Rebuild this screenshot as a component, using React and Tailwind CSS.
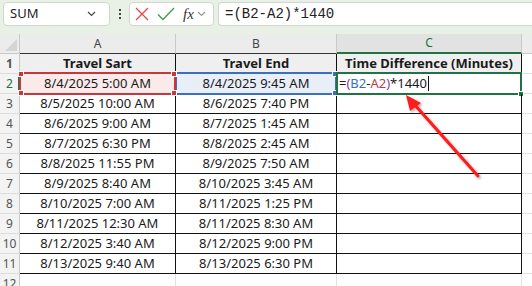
import React from 'react';

const rows = [
  ['8/4/2025 5:00 AM', '8/4/2025 9:45 AM'],
  ['8/5/2025 10:00 AM', '8/6/2025 7:40 PM'],
  ['8/6/2025 9:00 AM', '8/7/2025 1:45 AM'],
  ['8/7/2025 6:30 PM', '8/8/2025 2:45 AM'],
  ['8/8/2025 11:55 PM', '8/9/2025 7:50 AM'],
  ['8/9/2025 8:40 AM', '8/10/2025 3:45 AM'],
  ['8/10/2025 7:00 AM', '8/11/2025 1:25 PM'],
  ['8/11/2025 12:30 AM', '8/11/2025 8:30 AM'],
  ['8/12/2025 3:40 AM', '8/12/2025 9:00 PM'],
  ['8/13/2025 9:40 AM', '8/13/2025 6:30 PM'],
];

function Chevron({ className }) {
  return (
    <svg width="9" height="6" viewBox="0 0 9 6" className={className}>
      <path d="M1 1l3.5 3.5L8 1" fill="none" stroke="currentColor" strokeWidth="1.2" />
    </svg>
  );
}

function Handles({ color, corners }) {
  const pos = {
    tl: 'left-[-3px] top-[-3px]',
    tr: 'right-[-3px] top-[-3px]',
    bl: 'left-[-3px] bottom-[-3px]',
    br: 'right-[-3px] bottom-[-3px]',
  };
  return corners.map((c) => (
    <span key={c} className={`absolute w-[6px] h-[6px] border border-white ${color} ${pos[c]}`} />
  ));
}

function RowHeader({ n, active }) {
  return (
    <div
      className={`w-[20px] shrink-0 flex items-center justify-center text-[12px] bg-[#f3f3f3] border-b border-[#dcdcdc] relative ${
        active ? 'text-[#217346]' : 'text-[#555]'
      } border-r border-r-[#c9c9c9]`}
    >
      {n}
      {active && <span className="absolute right-[-1px] top-0 bottom-0 w-[2px] bg-[#217346]" />}
    </div>
  );
}

export default function App() {
  return (
    <div className="w-[532px] h-[286px] overflow-hidden bg-white relative" style={{ fontFamily: '"Noto Sans", sans-serif' }}>
      {/* formula bar */}
      <div className="h-[34px] bg-[#e9f0e5] flex items-start pt-[2px] pl-[3px] gap-[4px]">
        <div className="w-[107px] h-[24px] bg-white border border-[#d2d6d0] rounded-[4px] flex items-center justify-between pl-[6px] pr-[13px] text-[13px] text-[#222]">
          <span>SUM</span>
          <Chevron className="text-[#444]" />
        </div>
        <div className="w-[11px] h-[24px] flex flex-col items-center justify-center gap-[2px]">
          <span className="w-[2px] h-[2px] bg-[#444]" />
          <span className="w-[2px] h-[2px] bg-[#444]" />
          <span className="w-[2px] h-[2px] bg-[#444]" />
        </div>
        <div className="w-[85px] h-[24px] bg-white border border-[#d2d6d0] rounded-[4px] flex items-center pl-[5px] gap-[8px]">
          <svg width="14" height="14" viewBox="0 0 14 14">
            <path d="M1 1l12 12M13 1L1 13" stroke="#e0484a" strokeWidth="1.3" />
          </svg>
          <svg width="18" height="14" viewBox="0 0 18 14">
            <path d="M1 7.5l5 5L17 1" fill="none" stroke="#3e9b4f" strokeWidth="1.3" />
          </svg>
          <span className="flex items-center gap-[3px]">
            <span className="italic text-[15px] text-[#333] leading-none" style={{ fontFamily: '"Liberation Serif", serif' }}>fx</span>
            <Chevron className="text-[#999]" />
          </span>
        </div>
        <div className="flex-1 h-[24px] bg-white border border-[#d2d6d0] border-r-0 rounded-l-[4px] flex items-center pl-[6px] text-[14px] text-[#222]" style={{ fontFamily: '"Liberation Mono", monospace' }}>
          =(B2-A2)*1440
        </div>
      </div>

      {/* column headers */}
      <div className="flex h-[20px] text-[12px] text-[#444]">
        <div className="w-[20px] shrink-0 bg-[#ececec] border-r border-b border-[#c9c9c9] relative">
          <svg width="12" height="12" viewBox="0 0 12 12" className="absolute right-[2px] bottom-[2px]">
            <path d="M12 0V12H0Z" fill="#d4d4d4" />
          </svg>
        </div>
        <div className="w-[156px] shrink-0 bg-[#ececec] border-r border-[#c9c9c9] border-b border-b-[#333] flex items-center justify-center">A</div>
        <div className="w-[161px] shrink-0 bg-[#ececec] border-r border-[#c9c9c9] border-b border-b-[#333] flex items-center justify-center">B</div>
        <div className="w-[185px] shrink-0 bg-[#e2e2e2] border-r border-[#c9c9c9] border-b-2 border-b-[#217346] flex items-center justify-center text-[#217346]">C</div>
        <div className="flex-1 bg-[#ececec] border-b border-[#c9c9c9]" />
      </div>

      {/* row 1 */}
      <div className="flex h-[20px] text-[13px] font-bold text-[#1a1a1a]">
        <RowHeader n={1} />
        <div className="w-[156px] shrink-0 bg-[#efefef] border-r border-b border-[#111] flex items-center justify-center">Travel Sart</div>
        <div className="w-[161px] shrink-0 bg-[#efefef] border-r border-b border-[#111] flex items-center justify-center">Travel End</div>
        <div className="w-[185px] shrink-0 bg-[#efefef] border-r border-b border-[#111] flex items-center justify-center">Time Difference (Minutes)</div>
        <div className="flex-1 border-b border-[#e1e1e1]" />
      </div>

      {/* data rows */}
      {rows.map(([a, b], i) => {
        const first = i === 0;
        return (
          <div key={i} className="flex h-[20px] text-[13px] text-[#1a1a1a]">
            <RowHeader n={i + 2} active={first} />
            <div className={`w-[156px] shrink-0 border-r border-b border-[#111] flex items-center justify-center relative ${first ? 'bg-[#fbeaea] z-30' : ''}`}>
              {a}
              {first && (
                <span className="absolute left-[-1px] right-[-1px] top-[-2px] bottom-[-2px] border-2 border-[#c8363f]">
                  <Handles color="bg-[#c8363f]" corners={['tl', 'tr', 'bl', 'br']} />
                </span>
              )}
            </div>
            <div className={`w-[161px] shrink-0 border-r border-b border-[#111] flex items-center justify-center relative ${first ? 'bg-[#e9eff9] z-10' : ''}`}>
              {b}
              {first && (
                <span className="absolute left-[-1px] right-[-1px] top-[-2px] bottom-[-2px] border-2 border-[#3a6fc4]">
                  <Handles color="bg-[#3a6fc4]" corners={['tr', 'br']} />
                </span>
              )}
            </div>
            <div className="w-[185px] shrink-0 border-r border-b border-[#111] flex items-center relative z-20">
              {first && (
                <>
                  <span className="pl-[2px] flex items-center">
                    <span>=</span>
                    <span className="text-[#7a3fa0]">(</span>
                    <span className="text-[#3a6fc4]">B2</span>
                    <span>-</span>
                    <span className="text-[#c8363f]">A2</span>
                    <span className="text-[#7a3fa0]">)</span>
                    <span>*1440</span>
                    <span className="w-[1px] h-[15px] bg-[#111] ml-[1px]" />
                  </span>
                  <span className="absolute left-[-1px] right-[-1px] top-[-2px] bottom-[-2px] border-2 border-[#217346]">
                    <span className="absolute right-[-4px] bottom-[-4px] w-[6px] h-[6px] bg-[#217346] border border-white" />
                  </span>
                </>
              )}
            </div>
            <div className="flex-1 border-b border-[#e1e1e1]" />
          </div>
        );
      })}

      {/* row 12 */}
      <div className="flex h-[20px] text-[13px]">
        <RowHeader n={12} />
        <div className="w-[156px] shrink-0 border-r border-[#e1e1e1]" />
        <div className="w-[161px] shrink-0 border-r border-[#e1e1e1]" />
        <div className="w-[185px] shrink-0 border-r border-[#e1e1e1]" />
        <div className="flex-1" />
      </div>

      {/* arrow annotation */}
      <svg className="absolute left-0 top-0 pointer-events-none z-40" width="532" height="286">
        <defs>
          <filter id="sh" x="-20%" y="-20%" width="140%" height="140%">
            <feDropShadow dx="1.5" dy="1.5" stdDeviation="1" floodColor="#000" floodOpacity="0.35" />
          </filter>
        </defs>
        <g filter="url(#sh)">
          <line x1="478" y1="176" x2="414" y2="104" stroke="#ff1a1a" strokeWidth="3" strokeLinecap="round" />
          <path d="M406 95 L421 103 L410 111 Z" fill="#ff1a1a" />
        </g>
      </svg>
    </div>
  );
}
